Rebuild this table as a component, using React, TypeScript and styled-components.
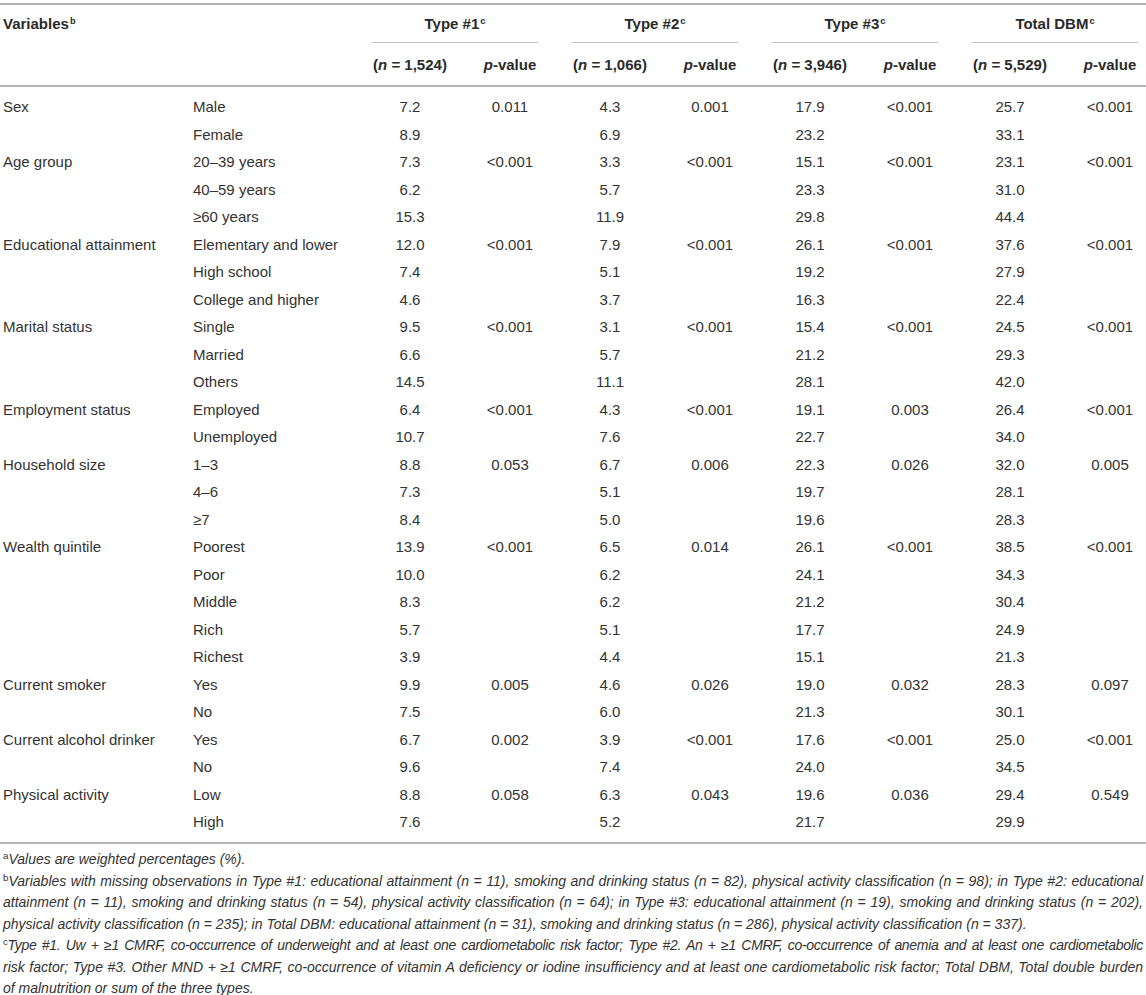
import React from "react";
import styled, { createGlobalStyle } from "styled-components";

const GlobalStyle = createGlobalStyle`
  html, body { margin: 0; padding: 0; background: #ffffff; }
  body { font-family: "Liberation Sans", Arial, Helvetica, sans-serif; color: #333333; }
`;

const COLS = "190px 156px repeat(4, 128px 72px)";

const Page = styled.div`
  width: 1146px;
  padding-top: 3px;
`;

const Table = styled.div`
  border-top: 2px solid #b4b4b4;
  border-bottom: 2px solid #b4b4b4;
  font-size: 15px;
`;

const HeadTop = styled.div`
  display: grid;
  grid-template-columns: ${COLS};
  height: 38px;
`;

const HeadSub = styled.div`
  display: grid;
  grid-template-columns: ${COLS};
  height: 42px;
  align-items: center;
  border-bottom: 2px solid #b4b4b4;
  font-weight: bold;
  color: #2a2a2a;
`;

const VarHead = styled.div`
  grid-column: span 2;
  padding: 0 0 0 3px;
  height: 37px;
  line-height: 37px;
  font-weight: bold;
  color: #2a2a2a;
`;

const GroupHead = styled.div`
  grid-column: span 2;
  padding: 0 8px 0 26px;
`;

const GroupLabel = styled.div`
  height: 37px;
  line-height: 37px;
  text-align: center;
  font-weight: bold;
  color: #2a2a2a;
  border-bottom: 1px solid #c4c4c4;
`;

const Sup = styled.sup`
  font-size: 0.62em;
  line-height: 0;
  vertical-align: 0.55em;
  margin-left: 1px;
`;

const Body = styled.div`
  padding: 6px 0 6px;
`;

const Row = styled.div`
  display: grid;
  grid-template-columns: ${COLS};
  height: 27.5px;
  line-height: 27.5px;
`;

const Cell = styled.div<{ $align?: "left" | "center" }>`
  text-align: ${(p) => (p.$align === "left" ? "left" : "center")};
  padding-left: ${(p) => (p.$align === "left" ? "3px" : "0")};
  white-space: nowrap;
`;

const Notes = styled.div`
  padding-top: 5.5px;
  font-size: 14px;
  font-style: italic;
  line-height: 21.5px;
  padding-left: 3px;
`;

const NoteLine = styled.div<{ $full?: boolean; $tight?: number }>`
  text-align: left;
  text-align-last: ${(p) => (p.$full ? "justify" : "left")};
  letter-spacing: ${(p) => (p.$tight ? `${p.$tight}px` : "normal")};
  white-space: nowrap;
  width: ${(p) => (p.$full ? "1140px" : "auto")};
`;

const NoteSup = styled.sup`
  font-size: 0.7em;
  line-height: 0;
  vertical-align: 0.5em;
  font-style: normal;
`;

type RowData = { v: string; s: string; d: string[] };

const rows: RowData[] = [
  { v: "Sex", s: "Male", d: ["7.2", "0.011", "4.3", "0.001", "17.9", "<0.001", "25.7", "<0.001"] },
  { v: "", s: "Female", d: ["8.9", "", "6.9", "", "23.2", "", "33.1", ""] },
  { v: "Age group", s: "20–39 years", d: ["7.3", "<0.001", "3.3", "<0.001", "15.1", "<0.001", "23.1", "<0.001"] },
  { v: "", s: "40–59 years", d: ["6.2", "", "5.7", "", "23.3", "", "31.0", ""] },
  { v: "", s: "≥60 years", d: ["15.3", "", "11.9", "", "29.8", "", "44.4", ""] },
  { v: "Educational attainment", s: "Elementary and lower", d: ["12.0", "<0.001", "7.9", "<0.001", "26.1", "<0.001", "37.6", "<0.001"] },
  { v: "", s: "High school", d: ["7.4", "", "5.1", "", "19.2", "", "27.9", ""] },
  { v: "", s: "College and higher", d: ["4.6", "", "3.7", "", "16.3", "", "22.4", ""] },
  { v: "Marital status", s: "Single", d: ["9.5", "<0.001", "3.1", "<0.001", "15.4", "<0.001", "24.5", "<0.001"] },
  { v: "", s: "Married", d: ["6.6", "", "5.7", "", "21.2", "", "29.3", ""] },
  { v: "", s: "Others", d: ["14.5", "", "11.1", "", "28.1", "", "42.0", ""] },
  { v: "Employment status", s: "Employed", d: ["6.4", "<0.001", "4.3", "<0.001", "19.1", "0.003", "26.4", "<0.001"] },
  { v: "", s: "Unemployed", d: ["10.7", "", "7.6", "", "22.7", "", "34.0", ""] },
  { v: "Household size", s: "1–3", d: ["8.8", "0.053", "6.7", "0.006", "22.3", "0.026", "32.0", "0.005"] },
  { v: "", s: "4–6", d: ["7.3", "", "5.1", "", "19.7", "", "28.1", ""] },
  { v: "", s: "≥7", d: ["8.4", "", "5.0", "", "19.6", "", "28.3", ""] },
  { v: "Wealth quintile", s: "Poorest", d: ["13.9", "<0.001", "6.5", "0.014", "26.1", "<0.001", "38.5", "<0.001"] },
  { v: "", s: "Poor", d: ["10.0", "", "6.2", "", "24.1", "", "34.3", ""] },
  { v: "", s: "Middle", d: ["8.3", "", "6.2", "", "21.2", "", "30.4", ""] },
  { v: "", s: "Rich", d: ["5.7", "", "5.1", "", "17.7", "", "24.9", ""] },
  { v: "", s: "Richest", d: ["3.9", "", "4.4", "", "15.1", "", "21.3", ""] },
  { v: "Current smoker", s: "Yes", d: ["9.9", "0.005", "4.6", "0.026", "19.0", "0.032", "28.3", "0.097"] },
  { v: "", s: "No", d: ["7.5", "", "6.0", "", "21.3", "", "30.1", ""] },
  { v: "Current alcohol drinker", s: "Yes", d: ["6.7", "0.002", "3.9", "<0.001", "17.6", "<0.001", "25.0", "<0.001"] },
  { v: "", s: "No", d: ["9.6", "", "7.4", "", "24.0", "", "34.5", ""] },
  { v: "Physical activity", s: "Low", d: ["8.8", "0.058", "6.3", "0.043", "19.6", "0.036", "29.4", "0.549"] },
  { v: "", s: "High", d: ["7.6", "", "5.2", "", "21.7", "", "29.9", ""] },
];

const groups = [
  { name: "Type #1", n: "1,524" },
  { name: "Type #2", n: "1,066" },
  { name: "Type #3", n: "3,946" },
  { name: "Total DBM", n: "5,529" },
];

export default function App() {
  return (
    <Page>
      <GlobalStyle />
      <Table>
        <HeadTop>
          <VarHead>
            Variables<Sup>b</Sup>
          </VarHead>
          {groups.map((g) => (
            <GroupHead key={g.name}>
              <GroupLabel>
                {g.name}
                <Sup>c</Sup>
              </GroupLabel>
            </GroupHead>
          ))}
        </HeadTop>
        <HeadSub>
          <Cell $align="left" />
          <Cell $align="left" />
          {groups.map((g) => (
            <React.Fragment key={g.name}>
              <Cell>
                (<i>n</i> = {g.n})
              </Cell>
              <Cell>
                <i>p</i>-value
              </Cell>
            </React.Fragment>
          ))}
        </HeadSub>
        <Body>
          {rows.map((r, i) => (
            <Row key={i}>
              <Cell $align="left">{r.v}</Cell>
              <Cell $align="left">{r.s}</Cell>
              {r.d.map((x, j) => (
                <Cell key={j}>{x}</Cell>
              ))}
            </Row>
          ))}
        </Body>
      </Table>
      <Notes>
        <NoteLine>
          <NoteSup>a</NoteSup>Values are weighted percentages (%).
        </NoteLine>
        <NoteLine $full>
          <NoteSup>b</NoteSup>Variables with missing observations in Type #1: educational attainment (n = 11), smoking and drinking status (n = 82), physical activity classification (n = 98); in Type #2: educational
        </NoteLine>
        <NoteLine $full>
          attainment (n = 11), smoking and drinking status (n = 54), physical activity classification (n = 64); in Type #3: educational attainment (n = 19), smoking and drinking status (n = 202),
        </NoteLine>
        <NoteLine>
          physical activity classification (n = 235); in Total DBM: educational attainment (n = 31), smoking and drinking status (n = 286), physical activity classification (n = 337).
        </NoteLine>
        <NoteLine $full $tight={-0.3}>
          <NoteSup>c</NoteSup>Type #1. Uw + ≥1 CMRF, co-occurrence of underweight and at least one cardiometabolic risk factor; Type #2. An + ≥1 CMRF, co-occurrence of anemia and at least one cardiometabolic
        </NoteLine>
        <NoteLine $full>
          risk factor; Type #3. Other MND + ≥1 CMRF, co-occurrence of vitamin A deficiency or iodine insufficiency and at least one cardiometabolic risk factor; Total DBM, Total double burden
        </NoteLine>
        <NoteLine>of malnutrition or sum of the three types.</NoteLine>
      </Notes>
    </Page>
  );
}
